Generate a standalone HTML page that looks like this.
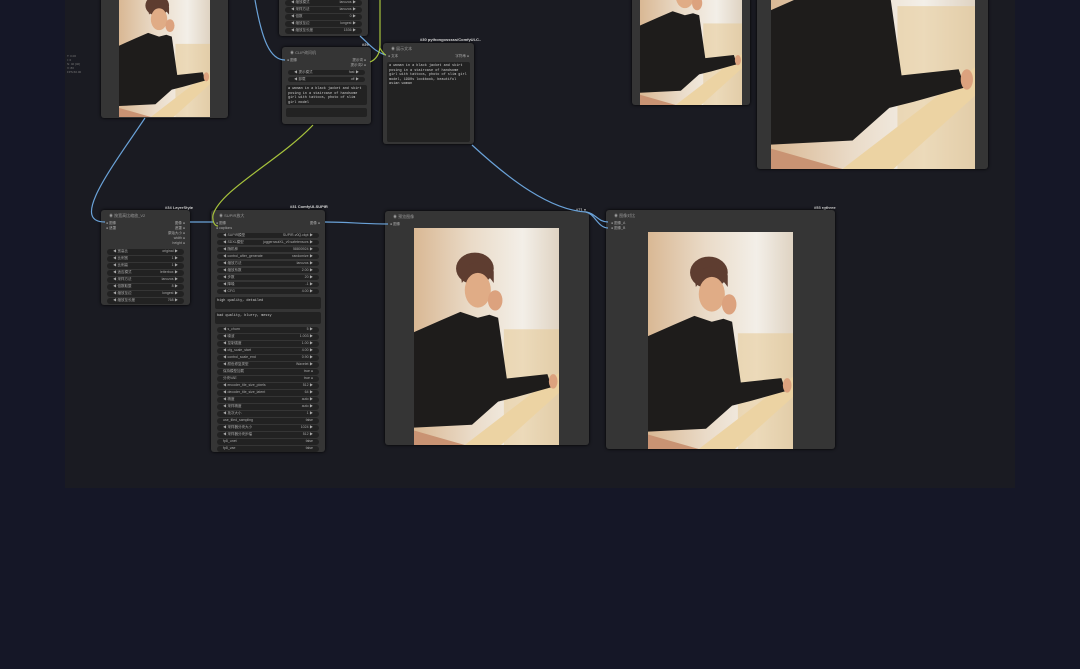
<!DOCTYPE html>
<html><head><meta charset="utf-8"><style>
*{margin:0;padding:0;box-sizing:border-box}
body{width:1080px;height:669px;background:#151727;position:relative;overflow:hidden;font-family:"Liberation Sans","Noto Sans CJK SC",sans-serif;color:#bbb}
#cv{position:absolute;left:65px;top:0;width:950px;height:488px;background:#1a1b22}
.n{position:absolute;background:#353535;border-radius:3px;box-shadow:0 0 3px #000;overflow:hidden}
.t{height:11px;font-size:4px;line-height:11px;padding-left:8px;color:#999}
.lab{position:absolute;font-size:4px;color:#ddd;font-weight:bold}
.w{height:5.5px;margin:1.5px 6px 0;background:#222;border-radius:3px;font-size:3.5px;line-height:5.5px;padding:0 6px;color:#aaa;display:flex;justify-content:space-between;overflow:hidden;white-space:nowrap}
.ta{margin:3px 4px 0;background:#222;border-radius:2px;font-size:3.5px;line-height:4.5px;padding:2px;color:#ccc;font-family:"Liberation Mono",monospace;overflow:hidden}
.io{font-size:3.5px;line-height:5px;padding:0 5px;color:#aaa;display:flex;justify-content:space-between}
svg{position:absolute;left:0;top:0}
</style></head><body>
<div id="cv"></div>
<div style="position:absolute;left:67px;top:54px;font-size:3px;line-height:4px;color:#777">T: 0.00<br>I: 0<br>N: 40 [40]<br>V: 80<br>FPS:60.00</div>

<div class="n" style="left:279px;top:-4px;width:89px;height:40px">
<div class="w" style="margin-top:4px"><span>◀ 缩放模式</span><span>lanczos ▶</span></div>
<div class="w"><span>◀ 采样方法</span><span>lanczos ▶</span></div>
<div class="w"><span>◀ 倍数</span><span>0 ▶</span></div>
<div class="w"><span>◀ 缩放至边</span><span>longest ▶</span></div>
<div class="w"><span>◀ 缩放至长度</span><span>1536 ▶</span></div>
</div>
<div class="lab" style="left:362px;top:42px">#29</div>
<div class="n" style="left:282px;top:47px;width:89px;height:77px">
<div class="t">◉ CLIP询问机</div>
<div class="io"><span>● 图像</span><span>提示词 ●</span></div>
<div class="io"><span></span><span>提示词2 ●</span></div>
<div class="w"><span>◀ 提示模式</span><span>fast ▶</span></div>
<div class="w"><span>◀ 卸载</span><span>off ▶</span></div>
<div class="ta" style="height:20px">a woman in a black jacket and skirt posing in a staircase of handsome girl with tattoos, photo of slim girl model</div>
<div class="ta" style="height:9px"></div>
</div>
<div class="lab" style="left:420px;top:37px">#30 pythongosssss/ComfyUI-C..</div>
<div class="n" style="left:383px;top:43px;width:91px;height:101px">
<div class="t">◉ 展示文本</div>
<div class="io"><span>● 文本</span><span>字符串 ●</span></div>
<div class="ta" style="height:80px">a woman in a black jacket and skirt posing in a staircase of handsome girl with tattoos, photo of slim girl model, 1990s lookbook, beautiful asian woman</div>
</div>

<div class="n" style="left:101px;top:-4px;width:127px;height:122px"></div>
<div class="n" style="left:632px;top:-4px;width:118px;height:109px"></div>
<div class="n" style="left:757px;top:-4px;width:231px;height:173px"></div>

<div class="lab" style="left:165px;top:205px">#34 LayerStyle</div>
<div class="n" style="left:101px;top:210px;width:89px;height:95px">
<div class="t">◉ 按宽高比缩放_V2</div>
<div class="io"><span>● 图像</span><span>图像 ●</span></div>
<div class="io"><span>● 遮罩</span><span>遮罩 ●</span></div>
<div class="io"><span></span><span>原始大小 ●</span></div>
<div class="io"><span></span><span>width ●</span></div>
<div class="io"><span></span><span>height ●</span></div>
<div class="w" style="margin-top:3px"><span>◀ 宽高比</span><span>original ▶</span></div>
<div class="w"><span>◀ 比例宽</span><span>1 ▶</span></div>
<div class="w"><span>◀ 比例高</span><span>1 ▶</span></div>
<div class="w"><span>◀ 适应模式</span><span>letterbox ▶</span></div>
<div class="w"><span>◀ 采样方法</span><span>lanczos ▶</span></div>
<div class="w"><span>◀ 倍数取整</span><span>8 ▶</span></div>
<div class="w"><span>◀ 缩放至边</span><span>longest ▶</span></div>
<div class="w"><span>◀ 缩放至长度</span><span>768 ▶</span></div>
</div>

<div class="lab" style="left:290px;top:204px">#31 ComfyUI-SUPIR</div>
<div class="n" style="left:211px;top:210px;width:114px;height:242px">
<div class="t">◉ SUPIR放大</div>
<div class="io"><span>● 图像</span><span>图像 ●</span></div>
<div class="io"><span>● captions</span><span></span></div>
<div class="w"><span>◀ SUPIR模型</span><span>SUPIR-v0Q.ckpt ▶</span></div>
<div class="w"><span>◀ SDXL模型</span><span>juggernautXL_v9.safetensors ▶</span></div>
<div class="w"><span>◀ 随机种</span><span>58800924 ▶</span></div>
<div class="w"><span>◀ control_after_generate</span><span>randomize ▶</span></div>
<div class="w"><span>◀ 缩放方法</span><span>lanczos ▶</span></div>
<div class="w"><span>◀ 缩放系数</span><span>2.00 ▶</span></div>
<div class="w"><span>◀ 步数</span><span>20 ▶</span></div>
<div class="w"><span>◀ 降噪</span><span>-1 ▶</span></div>
<div class="w"><span>◀ CFG</span><span>4.00 ▶</span></div>
<div class="ta" style="height:12px">high quality, detailed</div>
<div class="ta" style="height:12px">bad quality, blurry, messy</div>
<div class="w" style="margin-top:3px"><span>◀ s_churn</span><span>5 ▶</span></div>
<div class="w"><span>◀ 噪波</span><span>1.003 ▶</span></div>
<div class="w"><span>◀ 控制强度</span><span>1.00 ▶</span></div>
<div class="w"><span>◀ cfg_scale_start</span><span>4.00 ▶</span></div>
<div class="w"><span>◀ control_scale_end</span><span>0.90 ▶</span></div>
<div class="w"><span>◀ 颜色修复类型</span><span>Wavelet ▶</span></div>
<div class="w"><span>保持模型加载</span><span>true ●</span></div>
<div class="w"><span>分块VAE</span><span>true ●</span></div>
<div class="w"><span>◀ encoder_tile_size_pixels</span><span>512 ▶</span></div>
<div class="w"><span>◀ decoder_tile_size_latent</span><span>64 ▶</span></div>
<div class="w"><span>◀ 精度</span><span>auto ▶</span></div>
<div class="w"><span>◀ 采样精度</span><span>auto ▶</span></div>
<div class="w"><span>◀ 批次大小</span><span>1 ▶</span></div>
<div class="w"><span>use_tiled_sampling</span><span>false</span></div>
<div class="w"><span>◀ 采样器分块大小</span><span>1024 ▶</span></div>
<div class="w"><span>◀ 采样器分块步幅</span><span>512 ▶</span></div>
<div class="w"><span>fp8_unet</span><span>false</span></div>
<div class="w"><span>fp8_vae</span><span>false</span></div>
<div class="w"><span>◀ 采样器</span><span>RestoreEDMSampler ▶</span></div>
</div>

<div class="lab" style="left:576px;top:207px">#71 ●</div>
<div class="n" style="left:385px;top:211px;width:204px;height:234px">
<div class="t">◉ 预览图像</div>
<div class="io"><span>● 图像</span><span></span></div>
</div>
<div class="lab" style="left:814px;top:205px">#53 rgthree</div>
<div class="n" style="left:606px;top:210px;width:229px;height:239px">
<div class="t">◉ 图像对比</div>
<div class="io"><span>● 图像_A</span><span></span></div>
<div class="io"><span>● 图像_B</span><span></span></div>
</div>

<svg width="1080" height="669" viewBox="0 0 1080 669">
<defs>
<linearGradient id="bg" x1="0" y1="0" x2="1" y2="0"><stop offset="0" stop-color="#d9b894"/><stop offset=".4" stop-color="#eadbc8"/><stop offset=".75" stop-color="#f3efe8"/><stop offset="1" stop-color="#dfd3c2"/></linearGradient>
<g id="ph">
<rect width="100" height="150" fill="url(#bg)"/>
<rect x="62" y="70" width="38" height="80" fill="#e6c894" opacity=".55"/>
<polygon points="35,150 100,100 100,114 60,150" fill="#ecd3a3"/>
<polygon points="0,140 35,150 0,150" fill="#c99373"/>
<ellipse cx="42" cy="28" rx="13" ry="11" fill="#5e3d30"/>
<ellipse cx="44" cy="43" rx="9" ry="12" fill="#e0ac86"/>
<path d="M33 38 Q44 22 55 38 L55 30 Q44 18 32 30Z" fill="#5e3d30"/>
<ellipse cx="56" cy="50" rx="5" ry="7" fill="#dca27e"/>
<polygon points="0,72 18,64 32,58 44,62 52,60 58,62 64,104 92,101 95,110 70,117 58,120 40,136 0,138" fill="#1e1c1b"/>
<ellipse cx="96" cy="106" rx="3" ry="5" fill="#dca27e"/>
</g>
</defs>
<svg x="119" y="0" width="91" height="117" viewBox="0 22 100 128" preserveAspectRatio="none"><use href="#ph"/></svg>
<svg x="640" y="0" width="102" height="105" viewBox="0 47 100 103" preserveAspectRatio="none"><use href="#ph"/></svg>
<svg x="771" y="0" width="204" height="169" viewBox="0 67 100 83" preserveAspectRatio="none"><use href="#ph"/></svg>
<svg x="414" y="228" width="145" height="217" viewBox="0 0 100 150" preserveAspectRatio="none"><use href="#ph"/></svg>
<svg x="648" y="232" width="145" height="217" viewBox="0 0 100 150" preserveAspectRatio="none"><use href="#ph"/></svg>
<g fill="none" stroke-width="1.2">
<path d="M145 118 C110 170 70 222 105 222" stroke="#6aa2d8"/>
<path d="M190 222 L214 222" stroke="#6aa2d8"/>
<path d="M325 222 C350 222 360 224 388 224" stroke="#6aa2d8"/>
<path d="M472 145 C510 180 550 210 586 212 C595 213 598 222 608 222" stroke="#6aa2d8"/>
<path d="M586 212 C595 214 598 228 608 228" stroke="#6aa2d8"/>
<path d="M255 0 C262 40 270 60 285 60" stroke="#6aa2d8"/>
<path d="M360 36 C370 45 375 52 386 55" stroke="#6aa2d8"/>
<path d="M313 125 C280 160 220 190 213 215 C212 222 215 226 218 226" stroke="#a6c23c"/>
<path d="M380 0 L380 45 C380 55 375 60 370 62 M380 48 C382 52 385 55 386 55" stroke="#a6c23c"/>
</g>
</svg>
</body></html>
